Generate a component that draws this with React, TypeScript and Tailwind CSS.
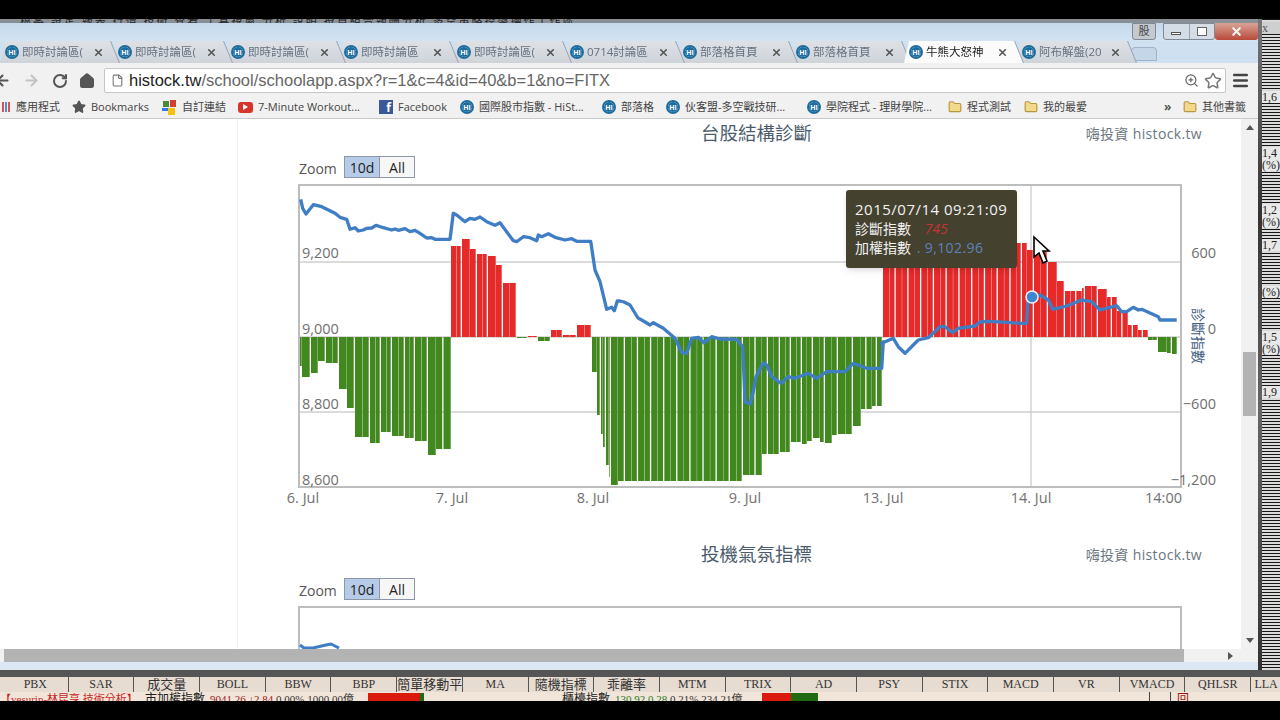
import { ArrowLeft, ArrowRight, RotateCw, Home, File, Star, ZoomIn, Menu, Folder, X } from "lucide-react";

const SANS = "[font-family:'Open_Sans','Noto_Sans_CJK_TC',sans-serif]";

type Seg = [number, number];

// bar steps: [right edge x, y of the free end], page coordinates
const bars: { from: number; color: string; steps: Seg[] }[] = [
  {
    from: 300,
    color: "#41881f",
    steps: [
      [302, 366], [311, 377], [318, 373], [326, 361], [339, 363], [347, 389], [355, 408], [370, 437],
      [381, 443], [392, 432], [405, 436], [415, 438], [428, 441], [436, 455], [451, 449],
    ],
  },
  {
    from: 451,
    color: "#e62a2a",
    steps: [[462, 246], [470, 239], [477, 249], [488, 254], [496, 256], [503, 265], [517, 283]],
  },
  { from: 517, color: "#41881f", steps: [[528, 338]] },
  { from: 528, color: "#e62a2a", steps: [[538, 336]] },
  { from: 538, color: "#41881f", steps: [[551, 341]] },
  { from: 551, color: "#e62a2a", steps: [[563, 330], [577, 335], [592, 325]] },
  {
    from: 592,
    color: "#41881f",
    steps: [
      [597, 372], [601, 415], [603, 434], [606, 447], [609, 465], [611, 477], [618, 485], [625, 481],
      [743, 481], [762, 475], [780, 454], [791, 452], [802, 442], [807, 444], [813, 441], [820, 438],
      [825, 442], [832, 443], [838, 435], [853, 434], [861, 426], [872, 409], [882, 406],
    ],
  },
  {
    from: 883,
    color: "#e62a2a",
    steps: [
      [1017, 239], [1027, 243], [1048, 250], [1057, 262], [1065, 281], [1082, 291], [1085, 288], [1098, 286],
      [1107, 289], [1117, 297], [1128, 311], [1138, 325], [1148, 330],
    ],
  },
  { from: 1148, color: "#41881f", steps: [[1158, 340], [1167, 352], [1172, 353], [1177, 354]] },
];

function barRects() {
  const out: { x: number; w: number; y: number; color: string }[] = [];
  for (const group of bars) {
    let left = group.from;
    let count = 0;
    for (const [right, y] of group.steps) {
      const n = Math.max(1, Math.round((right - left) / 6.4));
      const pitch = (right - left) / n;
      for (let i = 0; i < n; i++) {
        // the source chart alternates a hairline and a wider light gap
        const gap = count % 2 ? 1.3 : 0.3;
        out.push({ x: left + i * pitch, w: pitch - gap, y, color: group.color });
        count++;
      }
      left = right;
    }
  }
  return out;
}

// points read off the reference at 3x, grouped by crop origin
function crop(ox: number, oy: number, pts: number[][]) {
  return pts.map(([x, y]) => `${(ox + x / 3).toFixed(1)},${(oy + y / 3).toFixed(1)}`);
}

const linePoints = [
  ...crop(280, 120, [
    [62, 238], [68, 265], [78, 282], [100, 254], [125, 260], [165, 280], [180, 292], [200, 298], [210, 328], [225, 323],
    [235, 333], [250, 330], [260, 325], [275, 324], [288, 316], [310, 323], [335, 330], [345, 327], [355, 331], [375, 326],
    [390, 335], [405, 331], [420, 340], [440, 354], [455, 353], [465, 358], [510, 358], [520, 280], [530, 285], [555, 305],
    [570, 295], [585, 298], [600, 291], [620, 305], [645, 316], [660, 308], [700, 362], [710, 365], [730, 350], [750, 353],
    [770, 362], [775, 345], [785, 350], [805, 341], [825, 352], [855, 360], [875, 356], [890, 364], [932, 364], [945, 450],
    [960, 485], [980, 568], [995, 562], [1003, 572], [1012, 543], [1020, 543],
  ]),
  "624,302", "630,305", "638,318",
  ...crop(600, 320, [
    [125, 0], [150, 15], [160, 8], [190, 25], [225, 55], [245, 97], [260, 100], [275, 55], [295, 52], [312, 68],
    [335, 50], [360, 57], [410, 58], [428, 80], [435, 245], [450, 252], [460, 215], [468, 170], [490, 128], [500, 135],
    [515, 170], [543, 190], [565, 170], [585, 175], [625, 160], [650, 175], [680, 155], [735, 155], [760, 130], [800, 145],
    [845, 145], [850, 65],
  ]),
  ...crop(830, 120, [
    [155, 670], [190, 655], [205, 680], [225, 700], [250, 675], [265, 660], [295, 653], [330, 620], [345, 620], [368, 638],
    [385, 625], [435, 618], [450, 606], [475, 604], [580, 610], [590, 610], [595, 530], [605, 530], [630, 525], [655, 540],
    [668, 568], [710, 558], [755, 540], [785, 545], [810, 570], [860, 557], [875, 575], [890, 575], [910, 562], [925, 570],
    [935, 568], [985, 590], [990, 600], [1040, 600],
  ]),
].join(" ");

function HiIcon() {
  return (
    <span className="flex h-[14px] w-[14px] shrink-0 items-center justify-center rounded-full border-2 border-[#1d6c9e] bg-white">
      <span className="flex h-[10px] w-[10px] items-center justify-center rounded-full bg-[#1d6c9e] text-[7px] leading-none font-bold text-white">
        Hi
      </span>
    </span>
  );
}

const tabs = [
  "即時討論區(", "即時討論區(", "即時討論區(", "即時討論區", "即時討論區(", "0714討論區", "部落格首頁", "部落格首頁", "牛熊大怒神", "阿布解盤(20",
];

function TabStrip() {
  return (
    <div className="flex h-[22px] items-end">
      {tabs.map((t, i) => (
        <div
          key={i}
          className="relative mr-[-6px] w-[119px] shrink-0 [filter:drop-shadow(1px_0_0_#97a3b0)]"
          style={{ zIndex: i === 8 ? 30 : 20 - i }}
        >
          <div
            className={`flex h-[22px] items-center gap-[3px] pl-[5px] pr-[15px] [clip-path:polygon(0_100%,5px_0,110px_0,119px_100%)] ${
              i === 8 ? "bg-[#fbfbfb] text-[#222]" : "bg-[linear-gradient(180deg,#dde1e6,#cfd4da)] text-[#66717f]"
            }`}
          >
            <HiIcon />
            <span className="min-w-0 flex-1 overflow-hidden text-[11.5px] leading-none whitespace-nowrap">{t}</span>
            <X size={11} strokeWidth={3.5} className="shrink-0 text-[#555]" />
          </div>
        </div>
      ))}
      <div className="ml-[1px] mb-[2px] h-[14px] w-[26px] rounded-t-[4px] border border-[#9fb2c6] bg-[#c4d6e8]" />
    </div>
  );
}

function Bookmark({ icon, label, width }: { icon: React.ReactNode; label: string; width: number }) {
  return (
    <div className="flex shrink-0 items-center gap-[5px] overflow-hidden" style={{ width }}>
      {icon}
      <span className="text-[11px] whitespace-nowrap text-[#444]">{label}</span>
    </div>
  );
}

const folderIcon = <Folder size={14} className="shrink-0 fill-[#f3d98b] text-[#b8973f]" />;

function BookmarkBar() {
  return (
    <div className="flex h-[23px] items-center border-b border-[#c9c9c9] bg-[#f1f1f1]">
      <div className="w-[2px]" />
      <Bookmark
        width={70}
        label="應用程式"
        icon={<span className="h-[10px] w-[9px] shrink-0 bg-[repeating-linear-gradient(90deg,#d9534f_0,#d9534f_2px,#f1f1f1_2px,#f1f1f1_3px,#4a90d9_3px,#4a90d9_5px,#f1f1f1_5px,#f1f1f1_6px)]" />}
      />
      <Bookmark width={90} label="Bookmarks" icon={<Star size={14} className="shrink-0 fill-[#555] text-[#555]" />} />
      <Bookmark
        width={76}
        label="自訂連結"
        icon={
          <svg width="15" height="15" viewBox="0 0 15 15" className="shrink-0">
            <rect x="1" y="1" width="6" height="6" fill="#4a8a3a" />
            <rect x="8" y="0" width="6" height="7" fill="#d23f31" />
            <rect x="0" y="8" width="7" height="3" fill="#3b78e7" />
            <rect x="6" y="8" width="7" height="7" fill="#f4c20d" />
          </svg>
        }
      />
      <Bookmark
        width={141}
        label="7-Minute Workout..."
        icon={
          <span className="flex h-[11px] w-[15px] shrink-0 items-center justify-center rounded-[3px] bg-[#d8352a]">
            <span className="h-0 w-0 border-y-[3px] border-l-[5px] border-y-transparent border-l-white" />
          </span>
        }
      />
      <Bookmark
        width={81}
        label="Facebook"
        icon={
          <span className="flex h-[14px] w-[14px] shrink-0 items-end justify-end bg-[#3b5998] pr-[2px] text-[12px] leading-none font-bold text-white">
            f
          </span>
        }
      />
      <Bookmark width={142} label="國際股市指數 - HiSt..." icon={<HiIcon />} />
      <Bookmark width={64} label="部落格" icon={<HiIcon />} />
      <Bookmark width={141} label="伙客盟-多空戰技研..." icon={<HiIcon />} />
      <Bookmark width={141} label="學院程式 - 理財學院..." icon={<HiIcon />} />
      <Bookmark width={76} label="程式測試" icon={folderIcon} />
      <Bookmark width={140} label="我的最愛" icon={folderIcon} />
      <span className="w-[19px] text-[12px] font-bold text-[#555]">»</span>
      <Bookmark width={70} label="其他書籤" icon={folderIcon} />
    </div>
  );
}

function Toolbar() {
  return (
    <div className="flex h-[33px] items-center bg-[#f1f1f1] pt-[2px]">
      <ArrowLeft size={17} strokeWidth={3} className="ml-[-6px] text-[#555]" />
      <ArrowRight size={17} strokeWidth={3} className="ml-[12px] text-[#c4c4c4]" />
      <RotateCw size={16} strokeWidth={3} className="ml-[12px] text-[#555]" />
      <Home size={16} strokeWidth={3} className="ml-[11px] fill-[#555] text-[#555]" />
      <div className="ml-[9px] flex h-[25px] w-[1122px] items-center rounded-[2px] border border-[#c6c6c6] bg-white pl-[6px]">
        <File size={13} className="text-[#777]" />
        <span className="ml-[5px] text-[16.5px] leading-none whitespace-nowrap text-[#666] [font-family:'Liberation_Sans',sans-serif]">
          <span className="text-[#222]">histock.tw</span>/school/schoolapp.aspx?r=1&amp;c=4&amp;id=40&amp;b=1&amp;no=FITX
        </span>
        <ZoomIn size={15} className="ml-auto text-[#666]" />
        <Star size={18} className="mx-[3px] ml-[5px] text-[#777]" />
      </div>
      <Menu size={19} strokeWidth={3} className="ml-[5px] text-[#444]" />
    </div>
  );
}

function ZoomRow() {
  return (
    <div className={`ml-[61px] flex h-[22px] items-center text-[#555] ${SANS}`}>
      <span className="w-[45px] pt-[3px] text-[14px]">Zoom</span>
      <span className="flex h-[22px] w-[36px] items-center justify-center border border-[#8d97a8] bg-[#b6cbe8] text-[14px] text-[#222]">10d</span>
      <span className="flex h-[22px] w-[35px] items-center justify-center border border-l-0 border-[#8d97a8] bg-[#f7f7f7] text-[14px] text-[#222]">All</span>
    </div>
  );
}

function ChartTitle({ title }: { title: string }) {
  return (
    <div className={`flex h-[28px] items-center ${SANS}`}>
      <span className="ml-[463px] text-[18.5px] text-[#4b5b6b]">{title}</span>
      <span className="ml-auto mr-[39px] text-[14px] tracking-[0.35px] text-[#6b7680]">嗨投資 histock.tw</span>
    </div>
  );
}

function MainChart() {
  const labelFont = { fontFamily: "'Open Sans','Noto Sans CJK TC',sans-serif", fontSize: 14.5, fill: "#707070" };
  return (
    <svg width="980" height="330" viewBox="280 180 980 330" className="ml-[42px] block">
      {[262, 337, 412].map((y) => (
        <line key={y} x1="299" x2="1181" y1={y} y2={y} stroke="#cfcfcf" strokeWidth="1.5" />
      ))}
      <line x1="1031" x2="1031" y1="185" y2="487" stroke="#c8c8c8" strokeWidth="1.2" />
      {barRects().map((b, i) => (
        <rect key={i} x={b.x} width={b.w} y={Math.min(b.y, 337)} height={Math.abs(b.y - 337)} fill={b.color} />
      ))}
      <rect x="299" y="185" width="882" height="302" fill="none" stroke="#bdbdbd" strokeWidth="2" />
      <polyline points={linePoints} fill="none" stroke="#3f7ec4" strokeWidth="3.3" strokeLinejoin="round" />
      <circle cx="1032" cy="297" r="6" fill="#3f86d0" stroke="#f3f3f3" strokeWidth="1.5" />
      <g {...labelFont}>
        <text x="302" y="258">9,200</text>
        <text x="302" y="334">9,000</text>
        <text x="302" y="409">8,800</text>
        <text x="302" y="485">8,600</text>
        <text x="1216" y="258" textAnchor="end">600</text>
        <text x="1216" y="334" textAnchor="end">0</text>
        <text x="1216" y="409" textAnchor="end">−600</text>
        <text x="1216" y="485" textAnchor="end">−1,200</text>
        <text x="303" y="503" textAnchor="middle">6. Jul</text>
        <text x="452" y="503" textAnchor="middle">7. Jul</text>
        <text x="593" y="503" textAnchor="middle">8. Jul</text>
        <text x="745" y="503" textAnchor="middle">9. Jul</text>
        <text x="883" y="503" textAnchor="middle">13. Jul</text>
        <text x="1031" y="503" textAnchor="middle">14. Jul</text>
        <text x="1182" y="503" textAnchor="end">14:00</text>
      </g>
      <text
        transform="translate(1193 308) rotate(90)"
        style={{ fontFamily: "'Noto Sans CJK TC',sans-serif", fontSize: 14, fill: "#44617f" }}
      >
        診斷指數
      </text>
      <path d="M1034 237 L1034 257 L1039 253 L1043 263 L1047 261 L1043 251 L1049 251 Z" fill="#fff" stroke="#000" strokeWidth="1.6" />
    </svg>
  );
}

function ChartTooltip() {
  return (
    <div className={`absolute left-[608px] top-[10px] flex h-[78px] w-[171px] flex-col rounded-[3px] bg-[#45412f] pl-[9px] pt-[10px] text-[14px] leading-[19px] text-[#f2f2f2] shadow-md ${SANS}`}>
      <span className="text-[15px] tracking-[0.5px]">2015/07/14 09:21:09</span>
      <span>
        診斷指數 <span className="ml-[10px] italic text-[#c23232]">745</span>
      </span>
      <span>
        加權指數 <span className="ml-[2px] tracking-[0.4px] text-[#5d82bb]">. 9,102.96</span>
      </span>
    </div>
  );
}

function SecondChart() {
  return (
    <svg width="980" height="47" viewBox="280 602 980 47" className="ml-[42px] block">
      <path d="M299 660 L299 607 L1181 607 L1181 660" fill="none" stroke="#bdbdbd" strokeWidth="2" />
      <polyline points="300,645 304,648 313,648 326,645 331,644 339,648" fill="none" stroke="#3f7ec4" strokeWidth="3" />
    </svg>
  );
}

function VerticalScrollbar() {
  return (
    <div className="flex w-[17px] flex-col items-center bg-[#f1f1f1]">
      <span className="mt-[6px] h-0 w-0 border-x-[4px] border-b-[5px] border-x-transparent border-b-[#555]" />
      <div className="mt-[222px] h-[64px] w-[13px] bg-[#b3b3b3]" />
      <span className="mt-auto mb-[6px] h-0 w-0 border-x-[4px] border-t-[5px] border-x-transparent border-t-[#555]" />
    </div>
  );
}

const stockTabs = [
  "PBX", "SAR", "成交量", "BOLL", "BBW", "BBP", "簡單移動平", "MA", "隨機指標", "乖離率",
  "MTM", "TRIX", "AD", "PSY", "STIX", "MACD", "VR", "VMACD", "QHLSR", "LLA",
];

function StockTabs() {
  return (
    <div className="flex h-[15px] bg-[#e7dcd1] pl-[3px] leading-[15px] text-[#333] [font-family:'Liberation_Serif','Noto_Sans_CJK_TC',serif]">
      {stockTabs.map((t) => (
        <div
          key={t}
          className={`shrink-0 whitespace-nowrap border-r border-[#555] text-center ${/[A-Z]/.test(t) ? "text-[12px]" : "text-[13px]"} ${
            t === "LLA" ? "w-[30px] border-r-0" : "w-[65.7px]"
          }`}
        >
          {t}
        </div>
      ))}
    </div>
  );
}

function InfoRow() {
  return (
    <div className="flex h-[9px] items-start overflow-hidden bg-[#f0e5d8] text-[12px] leading-[14px] whitespace-nowrap [font-family:'Liberation_Serif','Noto_Sans_CJK_TC',serif]">
      <span className="w-[145px] text-[11px] text-[#c81e1e]">【yesurin-林昆亨 技術分析】</span>
      <span className="w-[65px] text-[#222]">市加權指數</span>
      <span className="w-[158px] text-[11px] text-[#a01818]">9041.26 ↓2.84 <span className="text-[#333]">0.00% 1000.00億</span></span>
      <span className="mt-[1px] h-[8px] w-[52px] bg-[#d91a0c]" />
      <span className="mt-[1px] h-[8px] w-[4px] bg-[#1f6a12]" />
      <span className="ml-[138px] w-[53px] text-[#222]">櫃檯指數</span>
      <span className="w-[147px] text-[11px] text-[#333]"><span className="text-[#2a7a2a]">130.92 0.28</span> 0.21% 234.21億</span>
      <span className="mt-[1px] h-[8px] w-[29px] bg-[#d91a0c]" />
      <span className="mt-[1px] h-[8px] w-[27px] bg-[#1f6a12]" />
      <span className="ml-[331px] border-l border-[#444] pl-[20px] text-[#333]">
        <span className="border-l border-[#444] pl-[6px] text-[#a01818]">回</span>
      </span>
    </div>
  );
}

function BackgroundStrip() {
  return (
    <div className="flex flex-1 overflow-hidden bg-[#3a3a3a]">
      <div className="w-[6px] bg-[linear-gradient(180deg,#777,#333_30%,#666_60%,#333)]" />
      <div className="flex flex-1 flex-col bg-[repeating-linear-gradient(180deg,#161616_0,#161616_1px,#dadada_1px,#dadada_3px)] pt-[3px] text-[12px] leading-[12px] text-[#222] [font-family:'Liberation_Serif',serif]">
        <span className="bg-[#cfcfcf] text-[#555]">x</span>
        <span className="mt-[57px] bg-[#e8e8e8]">1,6</span>
        <span className="mt-[44px] bg-[#e8e8e8]">1,4</span>
        <span className="bg-[#e8e8e8]">(%)</span>
        <span className="mt-[33px] bg-[#e8e8e8]">1,2</span>
        <span className="bg-[#e8e8e8]">(%)</span>
        <span className="mt-[11px] bg-[#e8e8e8]">1,7</span>
        <span className="mt-[35px] bg-[#e8e8e8]">(%)</span>
        <span className="mt-[33px] bg-[#e8e8e8]">1,5</span>
        <span className="bg-[#e8e8e8]">(%)</span>
        <span className="mt-[31px] bg-[#e8e8e8]">1,9</span>
      </div>
    </div>
  );
}

export default function App() {
  return (
    <div className="h-[720px] w-[1280px] overflow-hidden bg-black">
      <div className={`flex h-[720px] flex-col blur-[0.45px] ${SANS}`}>
        <div className="h-[19px] shrink-0" />

        <div className="flex h-[651px] shrink-0">
          {/* Browser window */}
          <div className="flex w-[1258px] shrink-0 flex-col rounded-br-[4px] bg-[#cfe0f0]">
            <div className="h-[4px] overflow-hidden bg-[#8a8f96] pl-[20px] text-[11px] leading-[4px] tracking-[2px] whitespace-nowrap text-[#222]">
              檔案 設定 報表 行情 技術 查看 工具視窗 分析 說明 投資組合報酬分析 多空策略控盤操作工作區
            </div>

            <div className="flex h-[18px] justify-end bg-[linear-gradient(180deg,#c5d9ec,#d3e3f2)]">
              <div className="mr-[7px] flex h-[17px] w-[24px] items-center justify-center rounded-b-[3px] border border-[#7f8a96] bg-[#c3c9cf] text-[11px] text-[#444]">
                股
              </div>
              <div className="flex h-[17px] w-[52px] rounded-b-[3px] border border-[#7f8a96] bg-[#d4dde6]">
                <div className="flex flex-1 items-center justify-center border-r border-[#9aa5b0]">
                  <span className="mt-[4px] h-[3px] w-[10px] border border-[#555] bg-white" />
                </div>
                <div className="flex flex-1 items-center justify-center">
                  <span className="h-[9px] w-[10px] border border-[#666] bg-white" />
                </div>
              </div>
              <div className="flex h-[17px] w-[43px] items-center justify-center rounded-b-[3px] bg-[linear-gradient(180deg,#d9a497,#b8493a)]">
                <X size={13} strokeWidth={4} className="text-[#f2f2f2]" />
              </div>
            </div>

            <div className="bg-[#cfe0f0]">
              <TabStrip />
            </div>
            <Toolbar />
            <BookmarkBar />

            {/* Page viewport */}
            <div className="flex h-[530px] bg-white">
              <div className="min-w-0 flex-1">
                <div className="ml-[238px] h-full overflow-hidden shadow-[-1px_0_0_#f0f0f0]">
                  <ChartTitle title="台股結構診斷" />
                  <div className="h-[9px]" />
                  <ZoomRow />
                  <div className="h-[2px]" />
                  <div className="relative">
                    <MainChart />
                    <ChartTooltip />
                  </div>
                  <div className="h-[30px]" />
                  <ChartTitle title="投機氣氛指標" />
                  <div className="h-[10px]" />
                  <ZoomRow />
                  <div className="h-[2px]" />
                  <SecondChart />
                </div>
              </div>
              <VerticalScrollbar />
            </div>

            {/* Horizontal scrollbar */}
            <div className="flex h-[13px] items-stretch bg-[#f1f1f1] pl-[4px]">
              <div className="w-[1180px] bg-[#b3b3b3]" />
              <span className="ml-[44px] mt-[3px] h-0 w-0 border-y-[4px] border-l-[5px] border-y-transparent border-l-[#555]" />
            </div>
            <div className="flex-1 bg-[#dbe7f2]" />
          </div>

          <BackgroundStrip />
        </div>

        <div className="h-[7px] shrink-0 bg-[#555]" />
        <StockTabs />
        <InfoRow />
      </div>
    </div>
  );
}
